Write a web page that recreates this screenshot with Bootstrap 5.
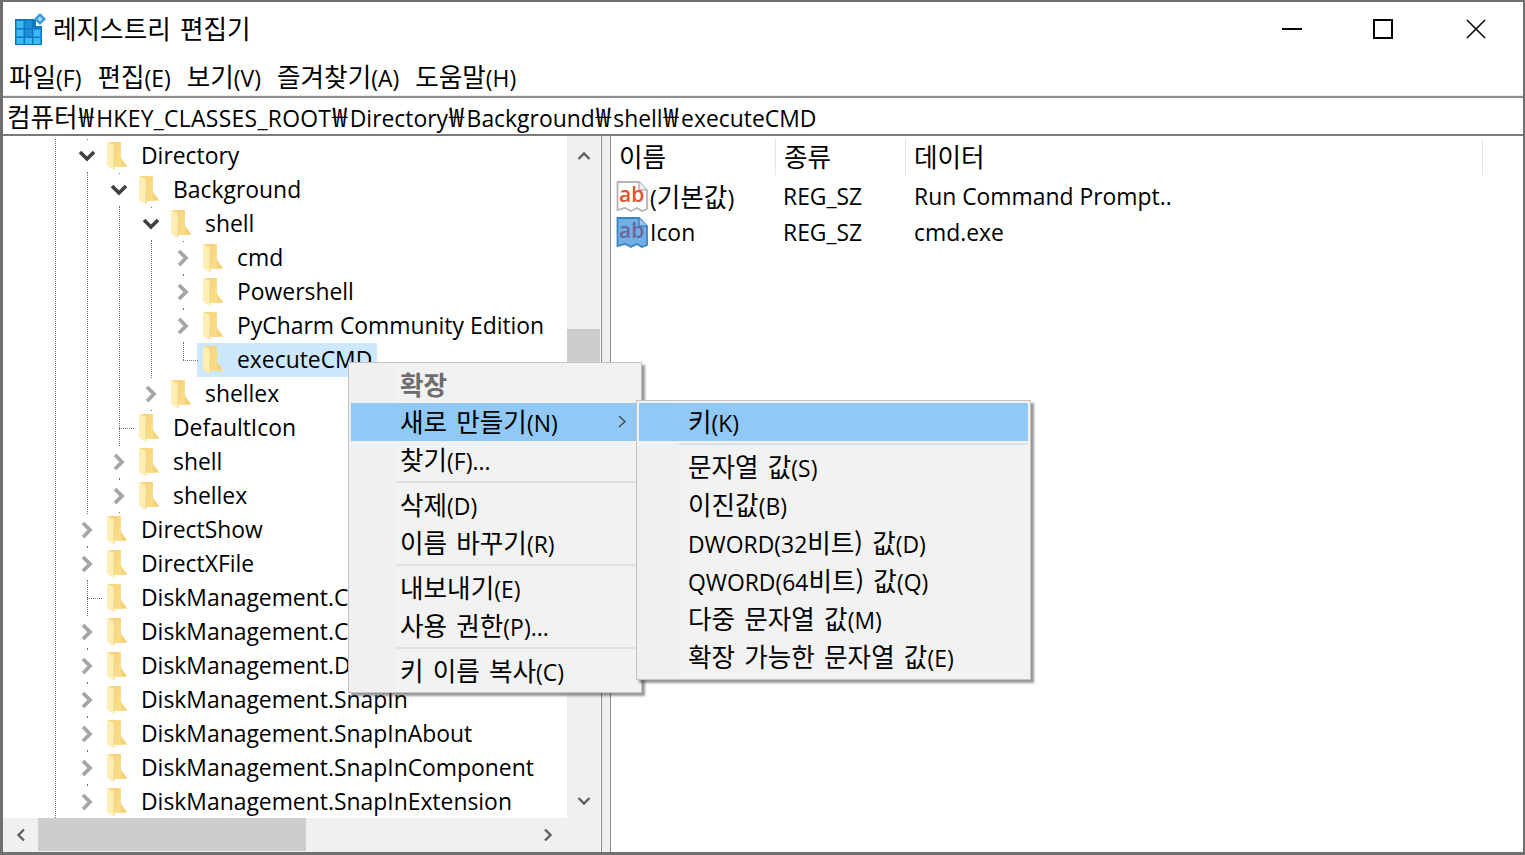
<!DOCTYPE html>
<html lang="ko">
<head>
<meta charset="utf-8">
<title>레지스트리 편집기</title>
<link href="https://cdn.jsdelivr.net/npm/bootstrap@5.3.0/dist/css/bootstrap.min.css" rel="stylesheet">
<style>
html,body{height:855px;overflow:hidden}
body{background:#6f6f6f;font-family:"Open Sans","Noto Sans CJK KR",sans-serif;font-size:22.9px;color:#000;line-height:1.2}
.ko{font-family:"Noto Sans CJK KR",sans-serif;font-size:25.6px;word-spacing:2px}
.won{font-family:"Noto Sans CJK KR",sans-serif;font-size:27px;padding:0 2.5px 0 1px}
.hkey{letter-spacing:.3px}
.regwin{position:relative;margin:2px 2px 0 3px;height:850px;background:#fff;overflow:hidden}
.titlebar{height:48px;flex:none}
.titlebar .appicon{margin:11px 7px 0 12px;width:31px;height:33px;flex:none}
.titletext{margin-top:11px}
.winbtns{margin-left:auto;padding-right:1px}
.wbtn{width:92px;height:54px;display:flex;align-items:center;justify-content:center}
.wbtn svg{width:22px;height:22px}
.wbtn.maxi svg{margin-right:2px}
.menubar{height:48px;flex:none;gap:16px;padding:11px 0 0 6px;border-bottom:2px solid #8f8f8f;box-shadow:inset 0 -1px 0 #ececec}
.addr{height:38px;flex:none;padding-left:4px;border-bottom:2px solid #7a7a7a;white-space:nowrap}
.panes{flex:1 1 auto;min-height:0}
.treepane{width:597px;flex:none;position:relative}
.treebody{flex:1 1 auto;min-height:0}
.treelist{width:564px;flex:none;overflow:hidden;padding:3px 0 0 36px}
.trow{height:34px;flex:none;white-space:nowrap}
.gd{width:32px;height:34px;flex:none;position:relative}
.gd.gv::before,.gd.gt::before,.gd.gl::before{content:"";position:absolute;left:16px;top:0;width:1px;height:34px;background:repeating-linear-gradient(#6f6f6f 0 1px,transparent 1px 2px)}
.gd.gl::before{height:17px}
.gd.gt::after,.gd.gl::after{content:"";position:absolute;left:16px;top:17px;width:16px;height:1px;background:repeating-linear-gradient(90deg,#6f6f6f 0 1px,transparent 1px 2px)}
.tw{width:32px;height:34px;flex:none;display:flex;align-items:center;justify-content:center;background:linear-gradient(#6f6f6f,#6f6f6f) 16px 0/1px 1px no-repeat,linear-gradient(#6f6f6f,#6f6f6f) 16px 33px/1px 1px no-repeat}
.nd{display:inline-flex;align-items:center;height:34px;padding:0 5px 0 4px}
.nd svg{width:20px;height:28px;flex:none;margin-right:14px}
.nd.sel{background:#cce8ff;margin-left:-2px;padding-left:6px}
.vbar{width:33px;flex:none;background:#f0f0f0;position:relative}
.sbtn{height:34px;display:flex;align-items:center;justify-content:center;flex:none}
.sbtn.upper{margin-top:3px}
.vthumb{position:absolute;left:0;right:0;top:193px;height:240px;background:#cdcdcd}
.hbar{height:34px;flex:none;background:#f0f0f0;position:relative}
.harrow{width:35px;height:33px;display:flex;align-items:center;justify-content:center;flex:none}
.harrow.last{margin-left:auto;margin-right:35px}
.hthumb{width:268px;height:33px;background:#cdcdcd;flex:none}
.split{width:10px;flex:none;background:#f0f0f0;border-left:1px solid #7f868c;border-right:1px solid #7f868c;margin-left:1px}
.listpane{flex:1 1 auto;min-width:0}
.lhead{height:43px;padding-top:2px}
.hcell{height:37px;padding-left:8px;border-right:1px solid #e5e5e5;display:flex;align-items:center}
.c1{width:165px;flex:none}
.c2{width:130px;flex:none}
.c3{width:577px;flex:none}
.lrow{height:36px}
.c1b{width:165px;flex:none;display:flex;align-items:center;padding-left:5px}
.c1b svg{width:33px;height:33px;flex:none;margin:0 1px 2px 0}
.c2b{width:130px;flex:none;padding-left:7px}
.c3b{padding-left:8px;white-space:nowrap}
.ctxmenu{position:absolute;display:block;margin:0;padding:2px;border:1px solid #c4c4c4;border-radius:0;background:#f2f2f2;box-shadow:3px 3px 2px rgba(70,70,70,.55);font-size:22.9px;color:#000;min-width:0;background-image:linear-gradient(#f0f0f0,#f0f0f0);background-repeat:no-repeat}
.ctx-main{left:345px;top:360px;width:294px;height:331px;background-size:46px 100%;z-index:5}
.ctx-sub{left:633px;top:398px;width:395px;height:280px;background-size:42px 100%;z-index:6}
.ctxmenu .dropdown-item{height:38px;display:flex;align-items:center;padding:0 0 0 49px;background:transparent;color:#000;position:relative}
.ctxmenu .dropdown-item.hot{background:#90c8f6}
.ctxmenu .dropdown-item.head{font-weight:700;color:#6d6d6d}
.ctxmenu .dropdown-item.head .ko{font-weight:700}
.ctxmenu li.dv{height:7px;position:relative}
.ctxmenu li.dv::after{content:"";position:absolute;left:45px;right:0;top:2px;height:2px;background:#e0e0e0}
.ctx-sub li.dv::after{left:40px}
.subarrow{position:absolute;right:13px;top:12px;width:8px;height:13px}
</style>
</head>
<body>
<svg width="0" height="0" class="position-absolute">
<defs>
<linearGradient id="fg" x1="0" y1="0" x2="1" y2="1"><stop offset="0" stop-color="#f6d37b"/><stop offset="1" stop-color="#fbdf8e"/></linearGradient>
<symbol id="fold" viewBox="0 0 20 28"><path d="M1 0H14V16L20 24V25H7V20Z" fill="url(#fg)"/><path d="M14 16L20 24H14Z" fill="#f3d27c"/><path d="M0 0L7 3V28L0 24Z" fill="#fdeeb4"/><path d="M7 3V28" stroke="#f0cf83" stroke-width=".7"/></symbol>
<symbol id="open" viewBox="0 0 18 12"><path d="M2 2L9 9L16 2" fill="none" stroke="#404040" stroke-width="3.6"/></symbol>
<symbol id="shut" viewBox="0 0 12 18"><path d="M2 2L9 9L2 16" fill="none" stroke="#a6a6a6" stroke-width="3.8"/></symbol>
</defs>
</svg>
<div class="regwin d-flex flex-column">
  <div class="titlebar d-flex">
    <svg class="appicon" viewBox="0 0 31 33"><path d="M0 6H21V13H27V32H0Z" fill="#0f78c4"/><g fill="#3db8f6"><rect x="1.500" y="8" width="7" height="7"/><rect x="1.500" y="16.500" width="7" height="7"/><rect x="1.500" y="25" width="7" height="6"/><rect x="18.500" y="16.500" width="7" height="7"/><rect x="10" y="25" width="7" height="6"/><rect x="18.500" y="25" width="7" height="6"/></g><g fill="#1c8fd8"><rect x="10" y="8" width="7" height="7"/><rect x="10" y="16.500" width="7" height="7"/></g><path d="M25 0L31 6L25 12L19 6Z" fill="#3a9ad8"/><path d="M25 3.500L27.500 6L25 8.500L22.500 6Z" fill="#a8dcf6"/></svg>
    <div class="titletext"><span class="ko">레지스트리 편집기</span></div>
    <div class="winbtns d-flex">
      <div class="wbtn"><svg viewBox="0 0 22 22"><path d="M1 11H21" stroke="#000" stroke-width="2"/></svg></div>
      <div class="wbtn maxi"><svg viewBox="0 0 22 22"><rect x="2" y="2" width="18" height="18" fill="none" stroke="#000" stroke-width="2"/></svg></div>
      <div class="wbtn"><svg viewBox="0 0 22 22"><path d="M2 2L20 20M20 2L2 20" stroke="#111" stroke-width="1.700"/></svg></div>
    </div>
  </div>
  <div class="menubar d-flex">
    <span><span class="ko">파일</span>(F)</span>
    <span><span class="ko">편집</span>(E)</span>
    <span><span class="ko">보기</span>(V)</span>
    <span><span class="ko">즐겨찾기</span>(A)</span>
    <span><span class="ko">도움말</span>(H)</span>
  </div>
  <div class="addr d-flex align-items-center"><span><span class="ko">컴퓨터</span><span class="won">₩</span><span class="hkey">HKEY_CLASSES_ROOT</span><span class="won">₩</span>Directory<span class="won">₩</span>Background<span class="won">₩</span>shell<span class="won">₩</span>executeCMD</span></div>
  <div class="panes d-flex">
    <div class="treepane d-flex flex-column">
      <div class="treebody d-flex overflow-hidden">
        <div class="treelist d-flex flex-column">
          <div class="trow d-flex"><span class="gd gv"></span><span class="tw"><svg width="18" height="12"><use href="#open"/></svg></span><span class="nd"><svg><use href="#fold"/></svg>Directory</span></div>
          <div class="trow d-flex"><span class="gd gv"></span><span class="gd gv"></span><span class="tw"><svg width="18" height="12"><use href="#open"/></svg></span><span class="nd"><svg><use href="#fold"/></svg>Background</span></div>
          <div class="trow d-flex"><span class="gd gv"></span><span class="gd gv"></span><span class="gd gv"></span><span class="tw"><svg width="18" height="12"><use href="#open"/></svg></span><span class="nd"><svg><use href="#fold"/></svg>shell</span></div>
          <div class="trow d-flex"><span class="gd gv"></span><span class="gd gv"></span><span class="gd gv"></span><span class="gd gv"></span><span class="tw"><svg width="12" height="18"><use href="#shut"/></svg></span><span class="nd"><svg><use href="#fold"/></svg>cmd</span></div>
          <div class="trow d-flex"><span class="gd gv"></span><span class="gd gv"></span><span class="gd gv"></span><span class="gd gv"></span><span class="tw"><svg width="12" height="18"><use href="#shut"/></svg></span><span class="nd"><svg><use href="#fold"/></svg>Powershell</span></div>
          <div class="trow d-flex"><span class="gd gv"></span><span class="gd gv"></span><span class="gd gv"></span><span class="gd gv"></span><span class="tw"><svg width="12" height="18"><use href="#shut"/></svg></span><span class="nd"><svg><use href="#fold"/></svg>PyCharm Community Edition</span></div>
          <div class="trow d-flex"><span class="gd gv"></span><span class="gd gv"></span><span class="gd gv"></span><span class="gd gv"></span><span class="gd gl"></span><span class="nd sel"><svg><use href="#fold"/></svg>executeCMD</span></div>
          <div class="trow d-flex"><span class="gd gv"></span><span class="gd gv"></span><span class="gd gv"></span><span class="tw"><svg width="12" height="18"><use href="#shut"/></svg></span><span class="nd"><svg><use href="#fold"/></svg>shellex</span></div>
          <div class="trow d-flex"><span class="gd gv"></span><span class="gd gv"></span><span class="gd gt"></span><span class="nd"><svg><use href="#fold"/></svg>DefaultIcon</span></div>
          <div class="trow d-flex"><span class="gd gv"></span><span class="gd gv"></span><span class="tw"><svg width="12" height="18"><use href="#shut"/></svg></span><span class="nd"><svg><use href="#fold"/></svg>shell</span></div>
          <div class="trow d-flex"><span class="gd gv"></span><span class="gd gv"></span><span class="tw"><svg width="12" height="18"><use href="#shut"/></svg></span><span class="nd"><svg><use href="#fold"/></svg>shellex</span></div>
          <div class="trow d-flex"><span class="gd gv"></span><span class="tw"><svg width="12" height="18"><use href="#shut"/></svg></span><span class="nd"><svg><use href="#fold"/></svg>DirectShow</span></div>
          <div class="trow d-flex"><span class="gd gv"></span><span class="tw"><svg width="12" height="18"><use href="#shut"/></svg></span><span class="nd"><svg><use href="#fold"/></svg>DirectXFile</span></div>
          <div class="trow d-flex"><span class="gd gv"></span><span class="gd gt"></span><span class="nd"><svg><use href="#fold"/></svg>DiskManagement.C</span></div>
          <div class="trow d-flex"><span class="gd gv"></span><span class="tw"><svg width="12" height="18"><use href="#shut"/></svg></span><span class="nd"><svg><use href="#fold"/></svg>DiskManagement.C</span></div>
          <div class="trow d-flex"><span class="gd gv"></span><span class="tw"><svg width="12" height="18"><use href="#shut"/></svg></span><span class="nd"><svg><use href="#fold"/></svg>DiskManagement.D</span></div>
          <div class="trow d-flex"><span class="gd gv"></span><span class="tw"><svg width="12" height="18"><use href="#shut"/></svg></span><span class="nd"><svg><use href="#fold"/></svg>DiskManagement.SnapIn</span></div>
          <div class="trow d-flex"><span class="gd gv"></span><span class="tw"><svg width="12" height="18"><use href="#shut"/></svg></span><span class="nd"><svg><use href="#fold"/></svg>DiskManagement.SnapInAbout</span></div>
          <div class="trow d-flex"><span class="gd gv"></span><span class="tw"><svg width="12" height="18"><use href="#shut"/></svg></span><span class="nd"><svg><use href="#fold"/></svg>DiskManagement.SnapInComponent</span></div>
          <div class="trow d-flex"><span class="gd gv"></span><span class="tw"><svg width="12" height="18"><use href="#shut"/></svg></span><span class="nd"><svg><use href="#fold"/></svg>DiskManagement.SnapInExtension</span></div>
        </div>
        <div class="vbar d-flex flex-column justify-content-between">
          <div class="sbtn upper"><svg width="14" height="10" viewBox="0 0 14 10"><path d="M1.500 8L7 2.500L12.500 8" fill="none" stroke="#606060" stroke-width="2.400"/></svg></div>
          <div class="vthumb"></div>
          <div class="sbtn"><svg width="14" height="10" viewBox="0 0 14 10"><path d="M1.500 2L7 7.500L12.500 2" fill="none" stroke="#606060" stroke-width="2.400"/></svg></div>
        </div>
      </div>
      <div class="hbar d-flex">
        <div class="harrow"><svg width="10" height="14" viewBox="0 0 10 14"><path d="M8 1.500L2.500 7L8 12.500" fill="none" stroke="#606060" stroke-width="2.400"/></svg></div>
        <div class="hthumb"></div>
        <div class="harrow last"><svg width="10" height="14" viewBox="0 0 10 14"><path d="M2 1.500L7.500 7L2 12.500" fill="none" stroke="#606060" stroke-width="2.400"/></svg></div>
      </div>
    </div>
    <div class="split"></div>
    <div class="listpane">
      <div class="lhead d-flex">
        <div class="hcell c1"><span class="ko">이름</span></div>
        <div class="hcell c2"><span class="ko">종류</span></div>
        <div class="hcell c3"><span class="ko">데이터</span></div>
      </div>
      <div class="lrow d-flex align-items-center">
        <div class="c1b"><svg viewBox="0 0 33 33"><path d="M1.500 2H23L31 10V29L26 31L21 28L15 31L9 28L1.500 30Z" fill="#fff" stroke="#b5b5b5" stroke-width="1.800"/><path d="M23 2V10H31" fill="#eee" stroke="#b5b5b5" stroke-width="1.500"/><text x="3" y="22" font-size="21" font-family="Open Sans" font-weight="600" fill="#e0532c">ab</text></svg><span>(<span class="ko">기본값</span>)</span></div>
        <div class="c2b">REG_SZ</div>
        <div class="c3b">Run Command Prompt..</div>
      </div>
      <div class="lrow d-flex align-items-center">
        <div class="c1b"><svg viewBox="0 0 33 33"><path d="M1.500 2H23L31 10V29L26 31L21 28L15 31L9 28L1.500 30Z" fill="#6fafe8" stroke="#3f83bd" stroke-width="1.800"/><path d="M23 2V10H31" fill="#9cc8ee" stroke="#3f83bd" stroke-width="1.500"/><text x="3" y="22" font-size="21" font-family="Open Sans" font-weight="600" fill="#68689a">ab</text></svg><span>Icon</span></div>
        <div class="c2b">REG_SZ</div>
        <div class="c3b">cmd.exe</div>
      </div>
    </div>
  </div>
  <ul class="dropdown-menu show ctxmenu ctx-main list-unstyled">
    <li><a class="dropdown-item head"><span class="ko">확장</span></a></li>
    <li><a class="dropdown-item hot"><span><span class="ko">새로 만들기</span>(N)</span><svg class="subarrow" viewBox="0 0 8 13"><path d="M1 1L7 6.500L1 12" fill="none" stroke="#444" stroke-width="1.300"/></svg></a></li>
    <li><a class="dropdown-item"><span><span class="ko">찾기</span>(F)...</span></a></li>
    <li class="dv"></li>
    <li><a class="dropdown-item"><span><span class="ko">삭제</span>(D)</span></a></li>
    <li><a class="dropdown-item"><span><span class="ko">이름 바꾸기</span>(R)</span></a></li>
    <li class="dv"></li>
    <li><a class="dropdown-item"><span><span class="ko">내보내기</span>(E)</span></a></li>
    <li><a class="dropdown-item"><span><span class="ko">사용 권한</span>(P)...</span></a></li>
    <li class="dv"></li>
    <li><a class="dropdown-item"><span><span class="ko">키 이름 복사</span>(C)</span></a></li>
  </ul>
  <ul class="dropdown-menu show ctxmenu ctx-sub list-unstyled">
    <li><a class="dropdown-item hot"><span><span class="ko">키</span>(K)</span></a></li>
    <li class="dv"></li>
    <li><a class="dropdown-item"><span><span class="ko">문자열 값</span>(S)</span></a></li>
    <li><a class="dropdown-item"><span><span class="ko">이진값</span>(B)</span></a></li>
    <li><a class="dropdown-item"><span>DWORD(32<span class="ko">비트) 값</span>(D)</span></a></li>
    <li><a class="dropdown-item"><span>QWORD(64<span class="ko">비트) 값</span>(Q)</span></a></li>
    <li><a class="dropdown-item"><span><span class="ko">다중 문자열 값</span>(M)</span></a></li>
    <li><a class="dropdown-item"><span><span class="ko">확장 가능한 문자열 값</span>(E)</span></a></li>
  </ul>
</div>
<script src="https://cdn.jsdelivr.net/npm/bootstrap@5.3.0/dist/js/bootstrap.bundle.min.js"></script>
</body>
</html>
